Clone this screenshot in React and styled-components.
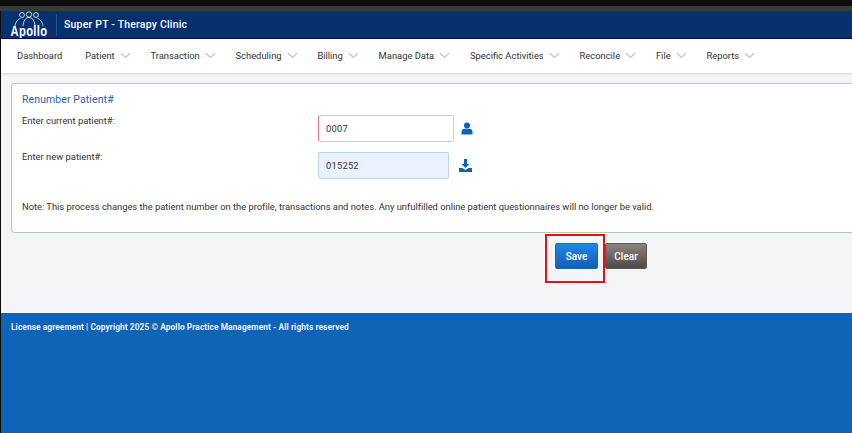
import React from "react";
import styled, { createGlobalStyle } from "styled-components";

const Global = createGlobalStyle`
  html, body { margin: 0; padding: 0; background: #0d0d0d; }
  body { font-family: Roboto, "Liberation Sans", sans-serif; }
  #root { width: 852px; height: 433px; overflow: hidden; }
`;
const Page = styled.div`
  width: 852px; height: 433px; display: flex; flex-direction: column;
  background: #0d0d0d; overflow: hidden;
`;
const TopStrip = styled.div`height: 6px; background: #0d0d0d; flex: none;`;
const TabStrip = styled.div`height: 5px; background: #3a3a3a; flex: none;`;
const Shell = styled.div`
  flex: 1; display: flex; flex-direction: column; margin-left: 1px; min-height: 0;
`;
const Header = styled.header`
  height: 28px; flex: none; box-sizing: border-box; background: #06306f;
  border-bottom: 1px solid #03036b; display: flex; align-items: center; padding-left: 9px;
`;
const Logo = styled.div`
  width: 38px; height: 27px; display: flex; flex-direction: column; align-items: center;
  color: #fff; overflow: hidden;
`;
const LogoWord = styled.span`
  font: 700 14px/12px "Liberation Sans", sans-serif; letter-spacing: 0.4px;
  transform: scaleX(0.8); margin-top: -1px; white-space: nowrap;
`;
const HeaderRule = styled.div`
  width: 1px; height: 22px; background: #2a5290; margin-left: 8px; margin-right: 7px;
`;
const ClinicName = styled.div`
  color: #fff; font-size: 10.5px; font-weight: 500; letter-spacing: 0.2px;
`;
const Nav = styled.nav`
  height: 34px; flex: none; box-sizing: border-box; background: #fff; display: flex; align-items: center;
  padding: 0 0 1px 16px; gap: 19.8px; box-shadow: 0 1px 2px rgba(0,0,0,.12); position: relative;
`;
const NavItem = styled.div`
  display: flex; align-items: center; gap: 5px; color: #333; font-size: 9.4px;
  white-space: nowrap; margin-right: ${p => p.$menu ? 0 : 3}px;
`;
const Chevron = styled.svg`width: 11px; height: 7px; display: block;`;
const Main = styled.main`
  height: 240px; flex: none; box-sizing: border-box; background: #f4f5f7; padding: 10px 0 0 10px;
`;
const Card = styled.section`
  height: 150px; box-sizing: border-box; background: #fff; border: 1px solid #a9d4a3;
  border-right: 0; border-radius: 4px 0 0 4px; padding: 9px 10px 0 10px;
`;
const Title = styled.h2`
  margin: 0 0 9px; font-size: 10.5px; line-height: 13px; font-weight: 400; color: #2a62ad; letter-spacing: .1px;
`;
const FormRow = styled.div`
  display: flex; align-items: flex-start; height: ${p => p.$h}px;
`;
const Label = styled.label`
  width: 296px; flex: none; color: #333; font-size: 9.4px; line-height: 12px; margin-top: ${p => p.$top}px;
`;
const Input = styled.div`
  box-sizing: border-box; width: ${p => p.$w}px; height: 27px; border-radius: 2px; flex: none;
  display: flex; align-items: center; padding-left: 7px; font-size: 9.4px; letter-spacing: .2px; color: #333;
  background: ${p => p.$filled ? "#eaf2ff" : "#fff"};
  border: 1px solid ${p => p.$filled ? "#bdd3f3" : "#cfcfcf"};
  border-left-color: ${p => p.$filled ? "#bdd3f3" : "#f27a7a"};
`;
const IconSlot = styled.svg`
  width: ${p => p.$w}px; height: 13px; margin-top: 7px; margin-left: ${p => p.$ml}px; flex: none; fill: #0c62b4;
`;
const Note = styled.p`
  margin: 0; padding-top: 1px; font-size: 9.4px; line-height: 12px; color: #333; white-space: nowrap; letter-spacing: -.02px;
`;
const Actions = styled.div`
  display: flex; padding: 10px 0 0 544px; position: relative;
`;
const SaveButton = styled.button`
  width: 43px; height: 26px; box-sizing: border-box; padding: 0; border: 1px solid #1a68bd; border-radius: 2px;
  background: linear-gradient(#2485e2, #0f5fb8); color: #fff; font: 500 10px Roboto, sans-serif;
`;
const ClearButton = styled.button`
  width: 42px; height: 26px; box-sizing: border-box; padding: 0; margin-left: 7px; border: 1px solid #5e5855; border-radius: 2px;
  background: linear-gradient(#8a8380, #4f4a48); color: #fff; font: 500 10px Roboto, sans-serif;
`;
const Highlight = styled.div`
  position: absolute; left: 534px; top: 1px; width: 60px; height: 49px; box-sizing: border-box;
  border: 2px solid #e2121b; pointer-events: none;
`;
const Footer = styled.footer`
  flex: 1; background: #1064b8; padding: 9px 0 0 10px; color: #e8f0fa;
  font-size: 8.4px; line-height: 11px; font-weight: 700; letter-spacing: .065px;
`;

const navItems = [
  ["Dashboard", false], ["Patient", true], ["Transaction", true], ["Scheduling", true], ["Billing", true],
  ["Manage Data", true], ["Specific Activities", true], ["Reconcile", true], ["File", true], ["Reports", true],
];

const Down = () => (
  <Chevron viewBox="0 0 11 7" fill="none" stroke="#c4c4c4" strokeWidth="1.2">
    <path d="M1 1.200 5.500 5.500 10 1.200" />
  </Chevron>
);

const LogoMark = () => (
  <svg width="34" height="15" viewBox="0 0 34 15" fill="none" stroke="#cfd9e8" strokeWidth="1" style={{ flex: "none" }}>
    <circle cx="17" cy="3.500" r="2.700" />
    <circle cx="10" cy="4" r="2.400" />
    <circle cx="24" cy="4" r="2.400" />
    <path d="M3 15c.5-4 3-7 5.500-7.500M31 15c-.5-4-3-7-5.500-7.500M11 15c.3-5 2.500-8.500 6-8.500s5.700 3.500 6 8.500" />
  </svg>
);

export default function App() {
  return (
    <Page>
      <Global />
      <TopStrip />
      <TabStrip />
      <Shell>
        <Header>
          <Logo>
            <LogoMark />
            <LogoWord>Apollo</LogoWord>
          </Logo>
          <HeaderRule />
          <ClinicName>Super PT - Therapy Clinic</ClinicName>
        </Header>
        <Nav>
          {navItems.map(([name, menu]) => (
            <NavItem key={name} $menu={menu}>{name}{menu && <Down />}</NavItem>
          ))}
        </Nav>
        <Main>
          <Card>
            <Title>Renumber Patient#</Title>
            <FormRow $h={37}>
              <Label $top={0}>Enter current patient#:</Label>
              <Input $w={136}>0007</Input>
              <IconSlot $w={12} $ml={7} viewBox="0 0 12 13">
                <circle cx="6" cy="3.400" r="3" />
                <path d="M.5 12.500V10C.5 8 2 6.800 3.500 6.800h5c1.500 0 3 1.200 3 3.200v2.500z" />
              </IconSlot>
            </FormRow>
            <FormRow $h={48}>
              <Label $top={-1}>Enter new patient#:</Label>
              <Input $w={131} $filled>015252</Input>
              <IconSlot $w={13} $ml={10} viewBox="0 0 13 13">
                <path d="M5 0h3v5h2.500L6.500 9 2.500 5H5z" />
                <path d="M0 9h3.500l3 2 3-2H13v4H0z" />
              </IconSlot>
            </FormRow>
            <Note>Note: This process changes the patient number on the profile, transactions and notes. Any unfulfilled online patient questionnaires will no longer be valid.</Note>
          </Card>
          <Actions>
            <SaveButton>Save</SaveButton>
            <ClearButton>Clear</ClearButton>
            <Highlight />
          </Actions>
        </Main>
        <Footer>License agreement | Copyright 2025 © Apollo Practice Management - All rights reserved</Footer>
      </Shell>
    </Page>
  );
}
